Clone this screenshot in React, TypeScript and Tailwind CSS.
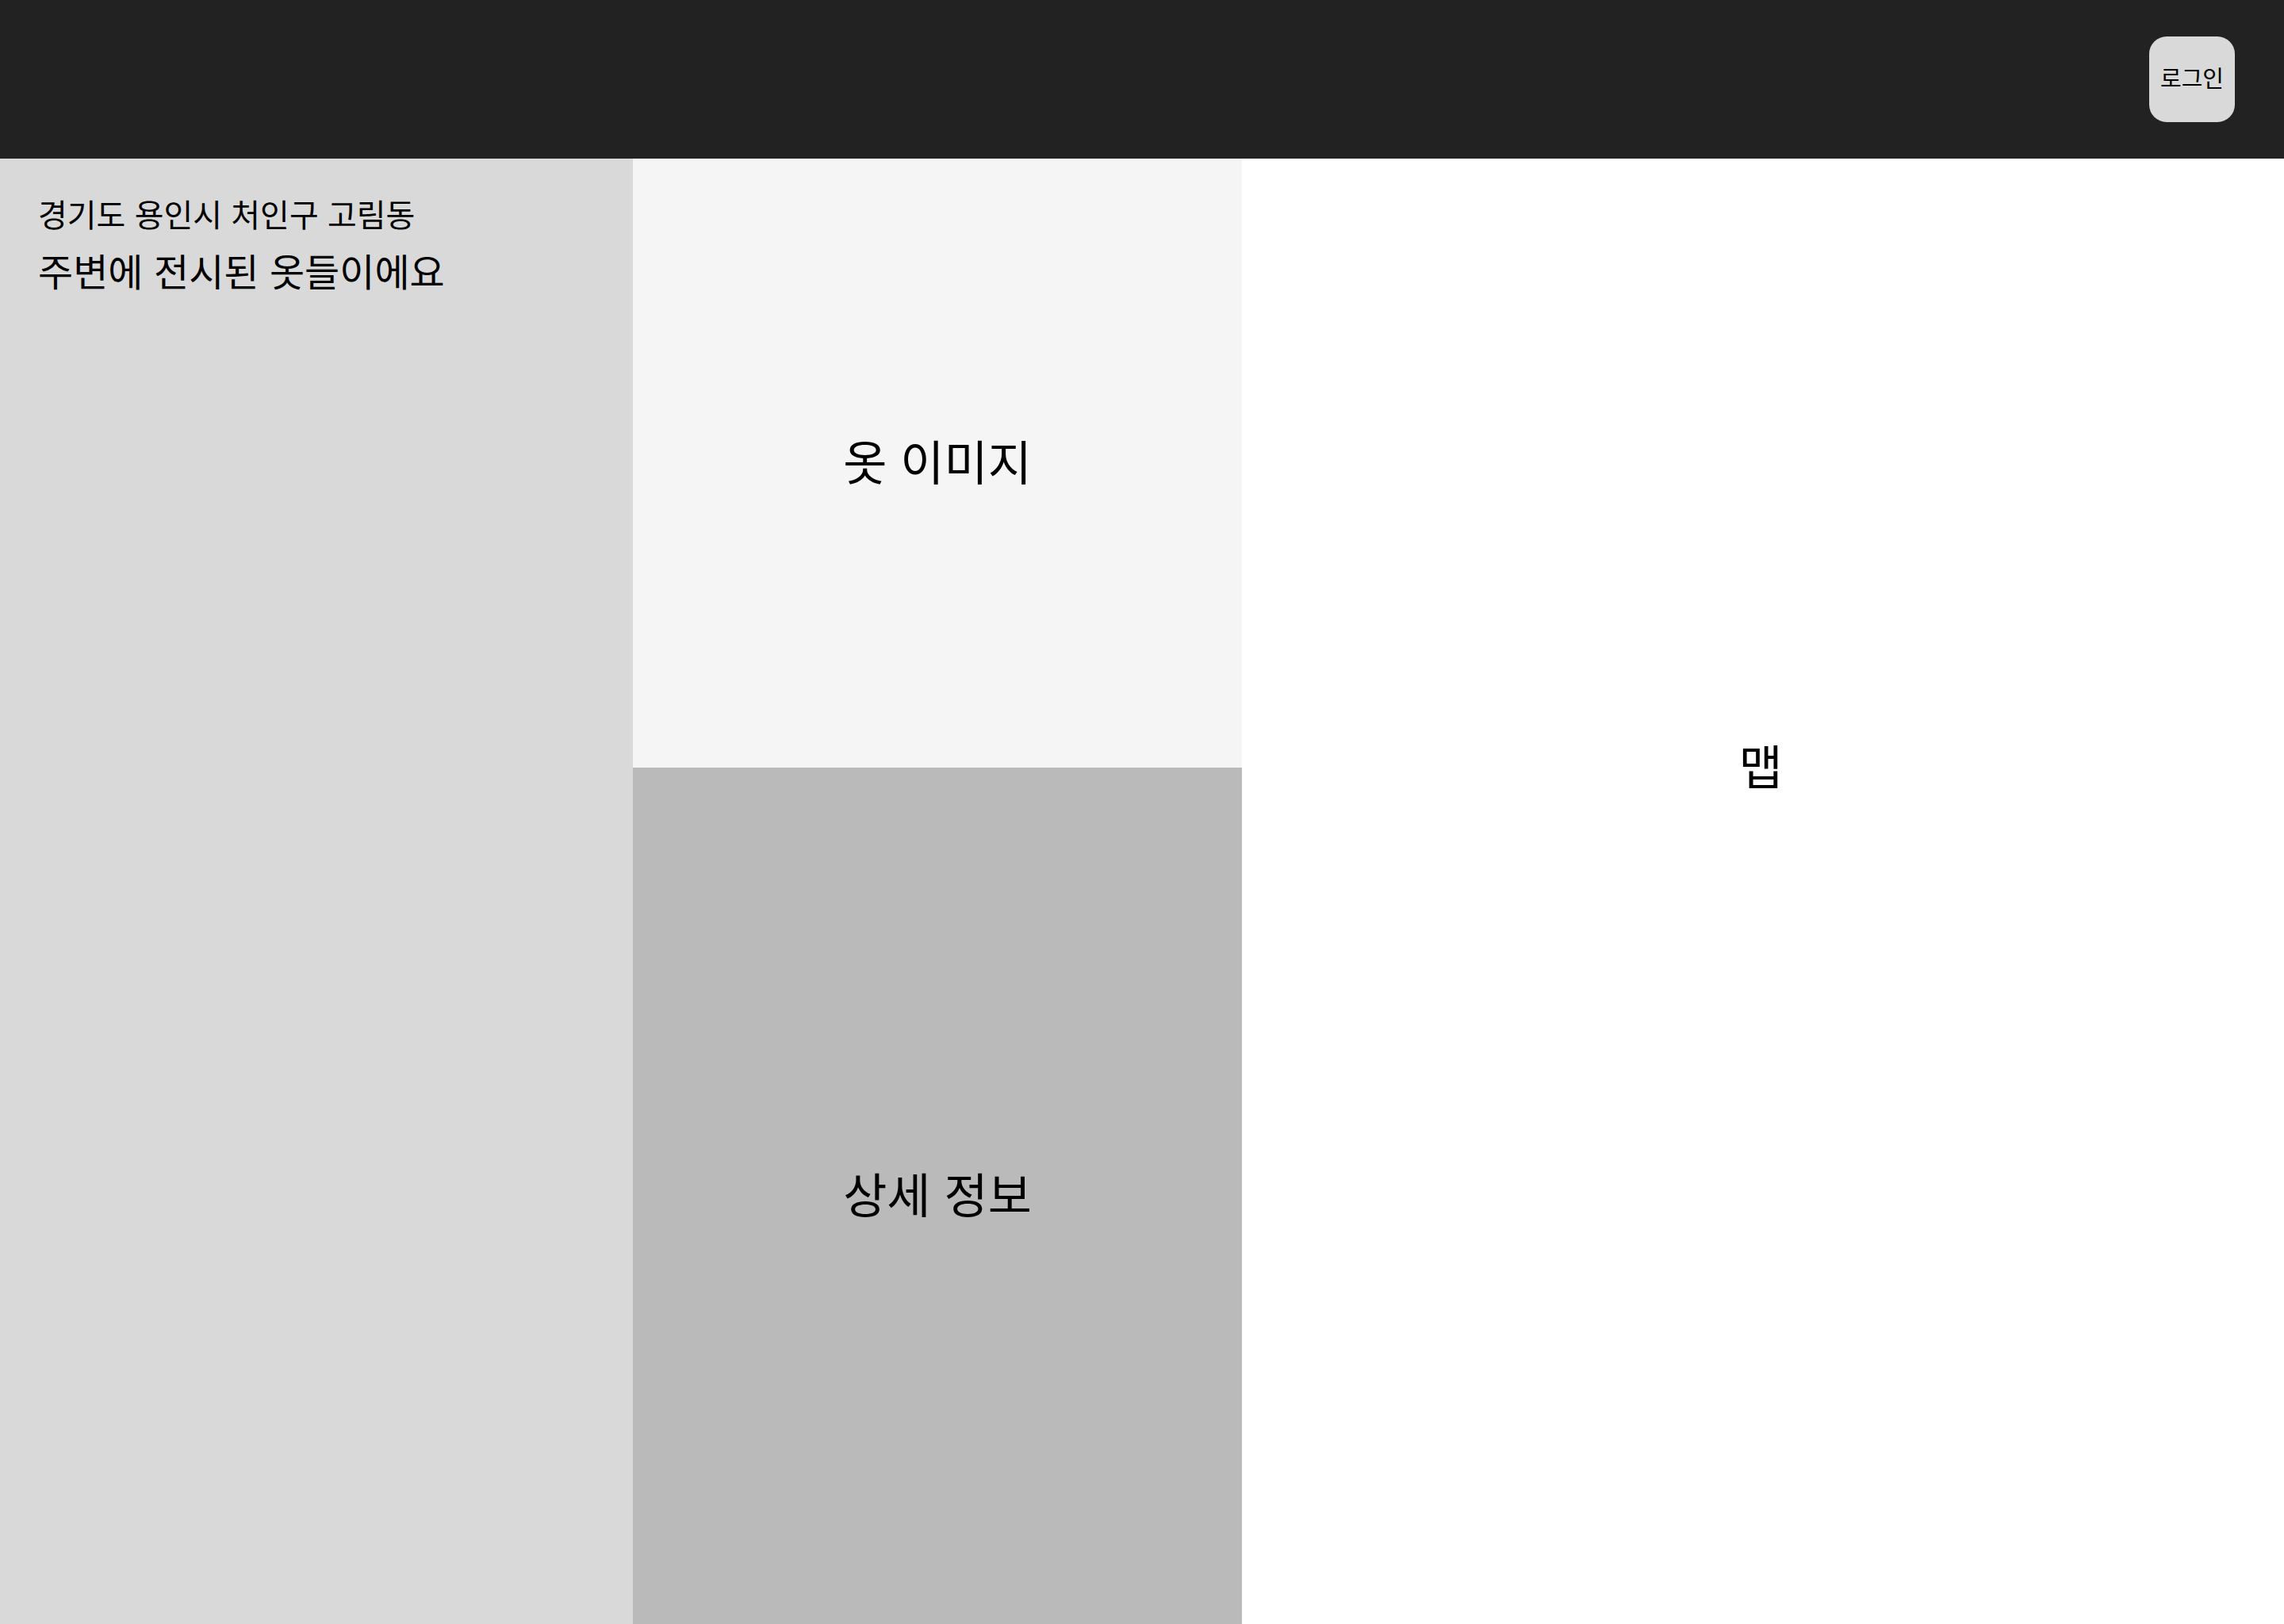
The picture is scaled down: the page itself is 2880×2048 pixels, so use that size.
export default function App() {
  return (
    <div className="w-[2880px] h-[2048px] overflow-hidden bg-white flex flex-col font-['Inter','Noto_Sans_CJK_KR',sans-serif] text-black">
      <header className="h-[200px] shrink-0 bg-[#222222] flex items-center justify-end pr-[62px]">
        <button className="w-[108px] h-[108px] rounded-[22px] bg-[#d9d9d9] text-[29px] flex items-center justify-center">
          로그인
        </button>
      </header>
      <main className="flex flex-1 min-h-0">
        <aside className="w-[798px] shrink-0 bg-[#d9d9d9] px-[48px] pt-[46px]">
          <p className="text-[40px] leading-[1.3]">경기도 용인시 처인구 고림동</p>
          <h2 className="text-[48px] leading-[1.4] mt-[12px]">주변에 전시된 옷들이에요</h2>
        </aside>
        <section className="w-[768px] shrink-0 flex flex-col">
          <div className="h-[768px] shrink-0 bg-[#f5f5f5] flex items-center justify-center text-[60px]">
            옷 이미지
          </div>
          <div className="flex-1 bg-[#bababa] flex items-center justify-center text-[60px]">
            상세 정보
          </div>
        </section>
        <section className="flex-1 bg-white">
          <div className="h-[1536px] pr-[6px] flex items-center justify-center text-[60px]">맵</div>
        </section>
      </main>
    </div>
  );
}
